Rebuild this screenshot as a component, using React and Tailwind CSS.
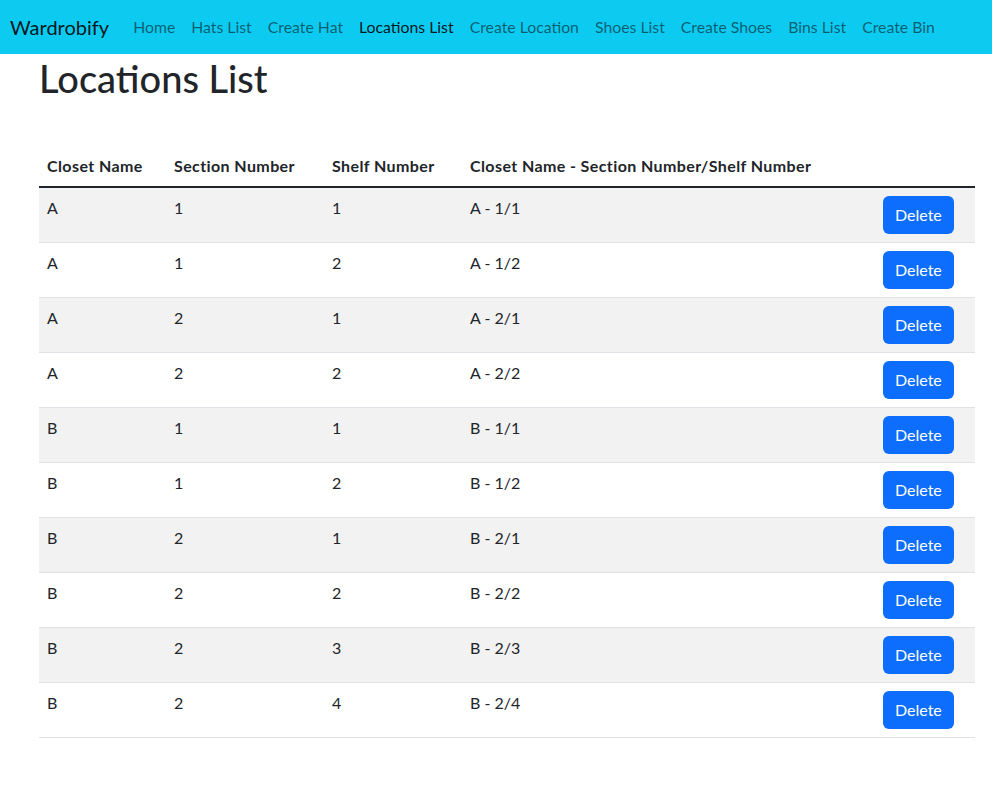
const navLinks = [
  'Home',
  'Hats List',
  'Create Hat',
  'Locations List',
  'Create Location',
  'Shoes List',
  'Create Shoes',
  'Bins List',
  'Create Bin',
];

const locations = [
  { closet: 'A', section: 1, shelf: 1 },
  { closet: 'A', section: 1, shelf: 2 },
  { closet: 'A', section: 2, shelf: 1 },
  { closet: 'A', section: 2, shelf: 2 },
  { closet: 'B', section: 1, shelf: 1 },
  { closet: 'B', section: 1, shelf: 2 },
  { closet: 'B', section: 2, shelf: 1 },
  { closet: 'B', section: 2, shelf: 2 },
  { closet: 'B', section: 2, shelf: 3 },
  { closet: 'B', section: 2, shelf: 4 },
];

const App = () => {
  return (
    <div className="min-h-screen bg-white text-[#212529] font-['Lato','Open_Sans',sans-serif]">
      <nav className="h-[54px] bg-[#0dcaf0] flex items-center pl-[10px]">
        <a className="text-[20px] leading-[30px] text-black/90 mr-4">Wardrobify</a>
        <ul className="flex items-center">
          {navLinks.map((link) => (
            <li key={link}>
              <a
                className={
                  link === 'Locations List'
                    ? 'block px-2 text-[15.8px] leading-6 text-black/90'
                    : 'block px-2 text-[15.8px] leading-6 text-black/55'
                }
              >
                {link}
              </a>
            </li>
          ))}
        </ul>
      </nav>

      <div className="pl-[39px] pr-[17px]">
        <h1 className="text-[38px] leading-[48px] font-medium">Locations List</h1>

        <table className="w-[936px] mt-[44px] border-collapse text-[16px] leading-6 table-fixed">
          <colgroup>
            <col className="w-[127px]" />
            <col className="w-[158px]" />
            <col className="w-[138px]" />
            <col className="w-[413px]" />
            <col className="w-[100px]" />
          </colgroup>
          <thead>
            <tr className="border-b-2 border-[#212529]">
              <th className="p-2 text-left font-bold tracking-[0.4px]">Closet Name</th>
              <th className="p-2 text-left font-bold tracking-[0.4px]">Section Number</th>
              <th className="p-2 text-left font-bold tracking-[0.4px]">Shelf Number</th>
              <th className="p-2 text-left font-bold tracking-[0.4px]">Closet Name - Section Number/Shelf Number</th>
              <th className="p-2"></th>
            </tr>
          </thead>
          <tbody>
            {locations.map((loc, index) => (
              <tr
                key={index}
                className={index % 2 === 0 ? 'bg-[#f2f2f2] border-b border-[#dee2e6]' : 'bg-white border-b border-[#dee2e6]'}
              >
                <td className="p-2 align-top">{loc.closet}</td>
                <td className="p-2 align-top">{loc.section}</td>
                <td className="p-2 align-top">{loc.shelf}</td>
                <td className="p-2 align-top">
                  {loc.closet} - {loc.section}/{loc.shelf}
                </td>
                <td className="p-2 align-top">
                  <button className="h-[38px] px-3 rounded-md bg-[#0d6efd] text-white text-[16px] leading-6">
                    Delete
                  </button>
                </td>
              </tr>
            ))}
          </tbody>
        </table>
      </div>
    </div>
  );
};

export default App;
